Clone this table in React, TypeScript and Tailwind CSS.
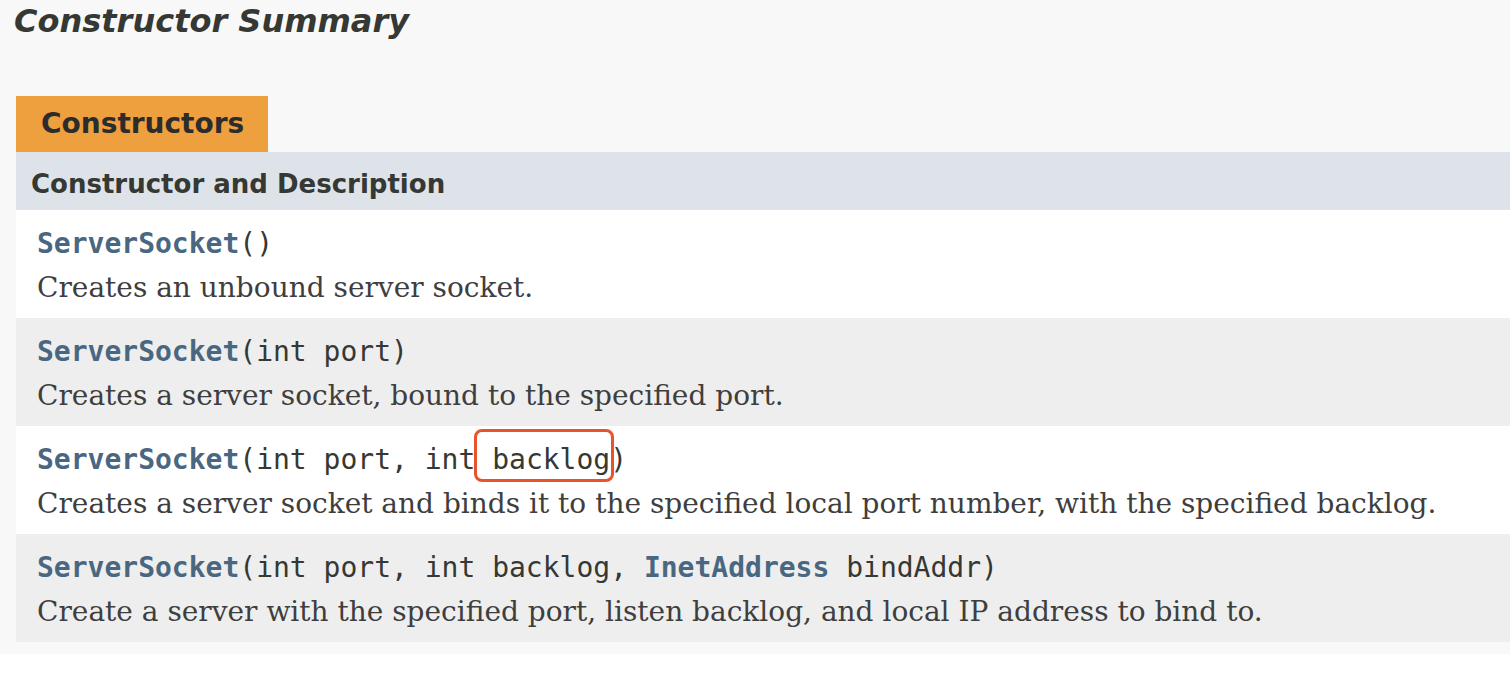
const rows = [
  {
    sig: [{ t: "()" }],
    desc: "Creates an unbound server socket.",
  },
  {
    sig: [{ t: "(int port)" }],
    desc: "Creates a server socket, bound to the specified port.",
  },
  {
    sig: [{ t: "(int port, int " }, { t: "backlog", mark: true }, { t: ")" }],
    desc: "Creates a server socket and binds it to the specified local port number, with the specified backlog.",
  },
  {
    sig: [
      { t: "(int port, int backlog, " },
      { t: "InetAddress", link: true },
      { t: " bindAddr)" },
    ],
    desc: "Create a server with the specified port, listen backlog, and local IP address to bind to.",
  },
];

type Part = { t: string; mark?: boolean; link?: boolean };

function Signature({ parts }: { parts: Part[] }) {
  return (
    <div className="font-['DejaVu_Sans_Mono',monospace] text-[28px] leading-[44px] text-[#353833] whitespace-pre">
      <span className="font-bold text-[#4a6782]">ServerSocket</span>
      {parts.map((p, i) => {
        if (p.link) {
          return (
            <span key={i} className="font-bold text-[#4a6782]">
              {p.t}
            </span>
          );
        }
        if (p.mark) {
          return (
            <span key={i} className="relative">
              {p.t}
              {/* red highlight box from the screenshot */}
              <span className="absolute -left-[18px] -right-[4px] top-[-14px] bottom-[-6px] border-[3px] border-[#e8542a] rounded-[8px]" />
            </span>
          );
        }
        return <span key={i}>{p.t}</span>;
      })}
    </div>
  );
}

export default function App() {
  return (
    <div className="min-h-screen bg-white">
      <div className="bg-[#f8f8f8] pb-[12px]">
        <h3 className="pl-[14px] pt-[1px] h-[96px] font-['DejaVu_Sans',sans-serif] italic font-bold text-[32px] leading-[40px] text-[#353833]">
          Constructor Summary
        </h3>
        <div className="ml-[16px]">
          <div className="w-[252px] h-[56px] bg-[#ee9f3e] pl-[25px] flex items-center font-['DejaVu_Sans',sans-serif] font-bold text-[28px] text-[#2c2c2c]">
            Constructors
          </div>
          <div className="h-[58px] bg-[#dee3e9] pl-[15px] pt-[6px] flex items-center font-['DejaVu_Sans',sans-serif] font-bold text-[26px] text-[#353833]">
            Constructor and Description
          </div>
          {rows.map((r, i) => (
            <div
              key={i}
              className={
                "h-[108px] pl-[21px] pt-[12px] " +
                (i % 2 === 0 ? "bg-white" : "bg-[#eeeeee]")
              }
            >
              <Signature parts={r.sig} />
              <div className="font-['DejaVu_Serif',serif] text-[28px] leading-[44px] text-[#3e3e3e] whitespace-nowrap">
                {r.desc}
              </div>
            </div>
          ))}
        </div>
      </div>
    </div>
  );
}
